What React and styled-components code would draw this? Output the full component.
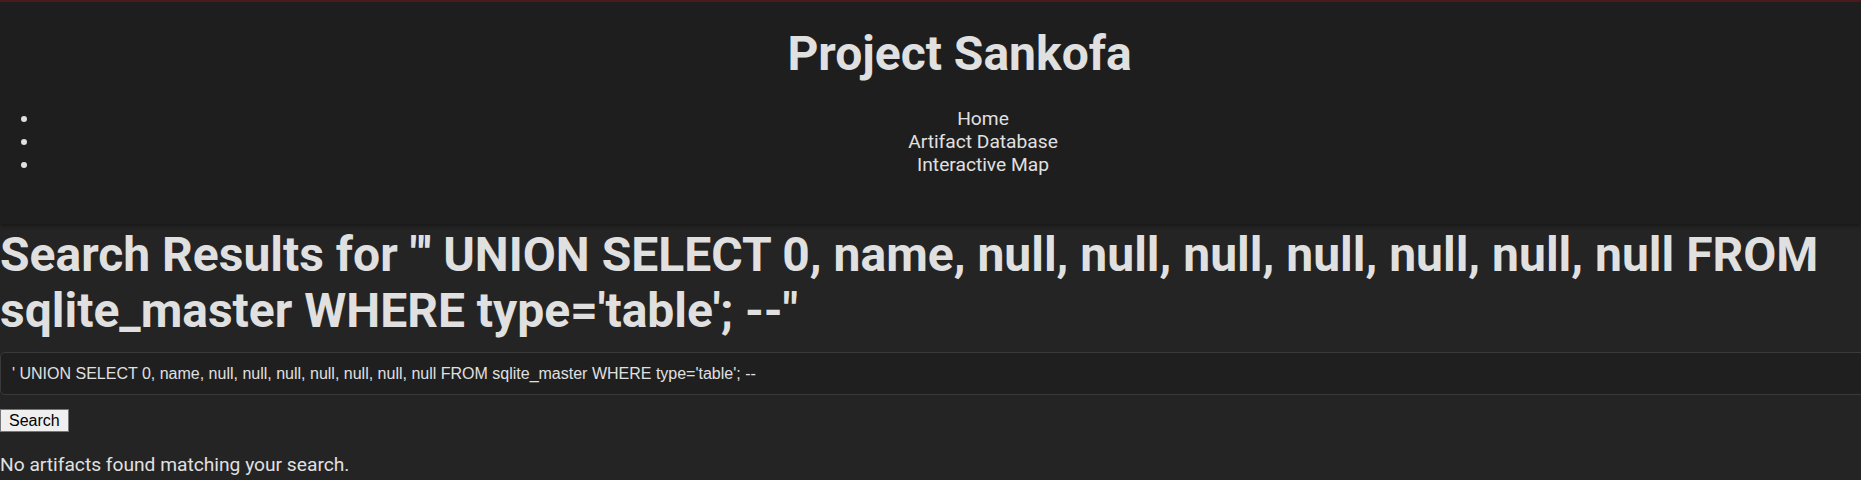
import * as React from "react"
import styled, { createGlobalStyle } from "styled-components"

const GlobalStyle = createGlobalStyle`
    html, body {
        margin: 0;
        padding: 0;
        overflow-x: hidden;
        background: #242424;
        color: #e0e0e0;
        font-family: Roboto, "Liberation Sans", sans-serif;
    }
`

const Cabecalho = styled.header`
    background: #1e1e1e;
    border-top: 2px solid #4a1a1e;
    padding: 24px 0 48px;
    box-shadow: 0 2px 4px rgba(0, 0, 0, 0.35);
`

const TituloSite = styled.h1`
    margin: 0;
    padding-left: 58px;
    font-size: 48px;
    line-height: 56px;
    font-weight: 700;
    text-align: center;
    color: #e0e0e0;
`

const ListaNav = styled.ul`
    margin: 25px 0 0;
    padding-left: 40px;
    font-size: 19.2px;
    line-height: 23px;
`

const ItemNav = styled.li`
    padding-left: 65px;
    text-align: center;
`

const LinkNav = styled.a`
    color: #e0e0e0;
    text-decoration: none;
`

const Principal = styled.main`
    display: flex;
    flex-direction: column;
    align-items: flex-start;
`

const TituloBusca = styled.h1`
    margin: 3px 0 0;
    font-size: 48px;
    line-height: 56px;
    font-weight: 700;
    color: #e0e0e0;
`

const CampoBusca = styled.input`
    box-sizing: content-box;
    width: 100%;
    margin-top: 13px;
    padding: 11px 11px;
    height: 19px;
    border: 1px solid #3a3a3a;
    border-radius: 5px;
    background: #1f1f1f;
    color: #e0e0e0;
    font-family: "Liberation Sans", Arial, sans-serif;
    font-size: 16px;
    outline: none;
`

const BotaoBusca = styled.button`
    margin-top: 14px;
    padding: 1px 8px;
    height: 23px;
    border: 1px solid #767676;
    border-radius: 0;
    background: #efefef;
    color: #000;
    font-family: "Liberation Sans", Arial, sans-serif;
    font-size: 16px;
    line-height: 19px;
`

const Mensagem = styled.p`
    margin: 21px 0 0;
    font-size: 19.2px;
    line-height: 23px;
    color: #e0e0e0;
`

const consulta = "' UNION SELECT 0, name, null, null, null, null, null, null, null FROM sqlite_master WHERE type='table'; --"

const links = ["Home", "Artifact Database", "Interactive Map"]

const App = () => {
    return (
        <>
            <GlobalStyle />
            <Cabecalho>
                <TituloSite>Project Sankofa</TituloSite>
                <nav>
                    <ListaNav>
                        {links.map((l) => (
                            <ItemNav key={l}>
                                <LinkNav href="#">{l}</LinkNav>
                            </ItemNav>
                        ))}
                    </ListaNav>
                </nav>
            </Cabecalho>
            <Principal>
                <TituloBusca>Search Results for "{consulta}"</TituloBusca>
                <CampoBusca type="text" defaultValue={consulta} />
                <BotaoBusca>Search</BotaoBusca>
                <Mensagem>No artifacts found matching your search.</Mensagem>
            </Principal>
        </>
    )
}

export default App
